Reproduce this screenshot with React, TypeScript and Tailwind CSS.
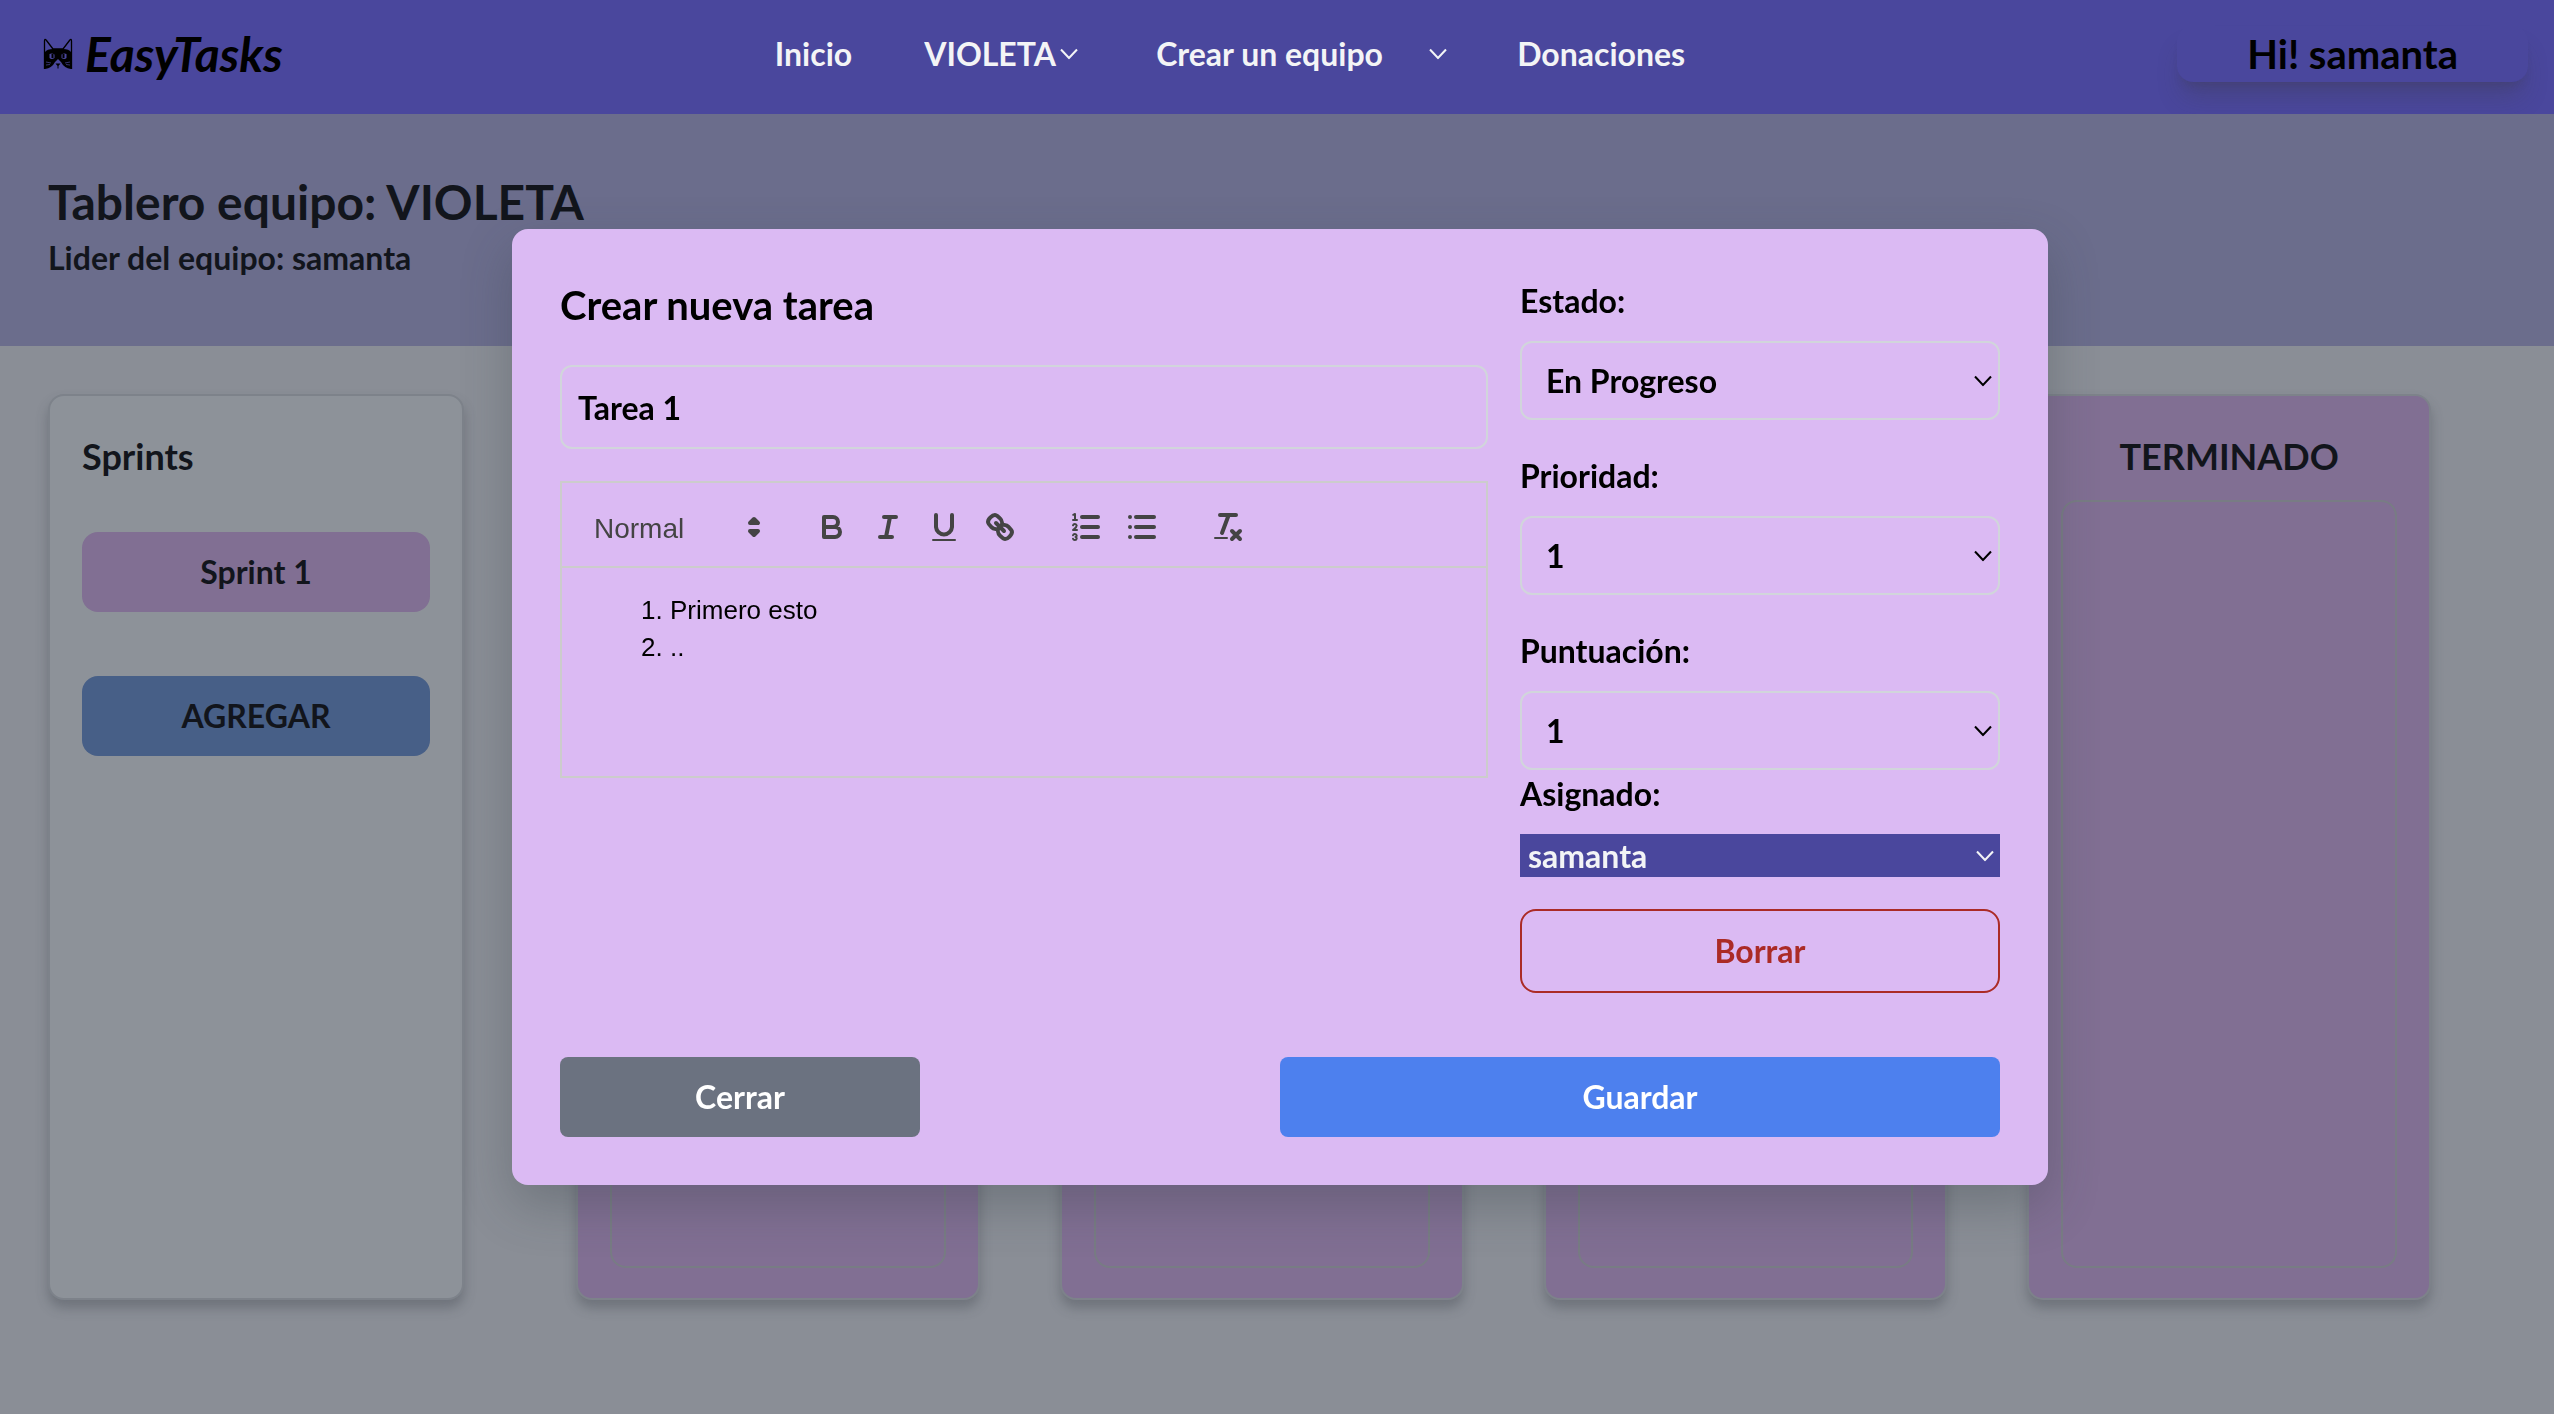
import type { ReactNode } from "react";

function Chevron({ className }: { className: string }) {
  return (
    <svg viewBox="0 0 18 11" fill="none" stroke="currentColor" strokeWidth="2" className={className} aria-hidden="true">
      <path d="M1 1l8 8.5L17 1" />
    </svg>
  );
}

function CatLogo() {
  return (
    <svg viewBox="0 0 30 32" className="h-8 w-[30px]" aria-hidden="true">
      <path d="M1.5 31V3Q1.500 0 3.500 2.500L10 11H20L26.500 2.500Q28.500 0 28.500 3V31" fill="none" stroke="black" strokeWidth="1.300" />
      <path
        fillRule="evenodd"
        d="M2 14Q4 11 10 11H20Q26 11 28 14V31Q21 30 18 24L15 21L12 24Q9 30 2 31ZM6.500 16V20Q8.500 22 11.500 20V16.500Q9 15 6.500 16ZM18.500 16.500V20Q21.500 22 23.500 20V16Q21 15 18.500 16.500Z"
      />
      <path d="M8.500 16h2v4h-2zM19.500 16h2v4h-2zM12.500 25.500h5l-2.500 3zM14.500 28h1v2.500h-1z" />
      <path d="M3 24l5 1M3 27l4-.5M27 24l-5 1M27 27l-4-.5" stroke="#4a479d" strokeWidth=".7" />
    </svg>
  );
}

function NavSelect({ options, label, className }: { options: string[]; label: string; className: string }) {
  return (
    <div className={`relative ${className}`}>
      <select aria-label={label} className="w-full appearance-none bg-transparent px-2 outline-none">
        {options.map((o) => (
          <option key={o}>{o}</option>
        ))}
      </select>
      <Chevron className="pointer-events-none absolute top-1/2 right-1.5 h-[11px] w-[18px] -translate-y-1/2" />
    </div>
  );
}

function Field({ id, label, options }: { id: string; label: string; options: string[] }) {
  return (
    <div className="flex flex-col gap-4">
      <label htmlFor={id} className="leading-12">
        {label}
      </label>
      <div className="relative">
        <select id={id} className="h-[79px] w-full appearance-none rounded-xl border-2 border-[#d1d5db] bg-transparent px-6 outline-none">
          {options.map((o) => (
            <option key={o}>{o}</option>
          ))}
        </select>
        <Chevron className="pointer-events-none absolute top-1/2 right-2 h-[11px] w-[18px] -translate-y-1/2" />
      </div>
    </div>
  );
}

function Tool({ label, children }: { label: string; children: ReactNode }) {
  return (
    <button type="button" aria-label={label} className="flex h-12 w-14 items-center justify-center">
      <svg viewBox="0 0 18 18" className="size-9" fill="none" stroke="#444" strokeWidth="2" strokeLinecap="round" strokeLinejoin="round">
        {children}
      </svg>
    </button>
  );
}

function Toolbar() {
  return (
    <div className="flex h-[87px] items-center gap-[30px] border-2 border-[#ccc] px-4 pt-1 text-[#444]">
      <div className="relative w-[196px]">
        <select aria-label="Formato" className="w-full appearance-none bg-transparent pl-4 text-[28px] leading-10 font-medium outline-none">
          <option>Normal</option>
        </select>
        <svg viewBox="0 0 18 18" className="pointer-events-none absolute top-1/2 right-0.5 size-9 -translate-y-1/2" fill="#444" stroke="#444" strokeWidth="2" strokeLinecap="round" strokeLinejoin="round" aria-hidden="true">
          <path d="M7 11l2 2 2-2zM7 7l2-2 2 2z" />
        </svg>
      </div>
      <div className="flex">
        <Tool label="Negrita">
          <path d="M5 4H9.500A2.500 2.500 0 0 1 12 6.500A2.500 2.500 0 0 1 9.500 9H5ZM5 9h5.500A2.500 2.500 0 0 1 13 11.500A2.500 2.500 0 0 1 10.500 14H5Z" />
        </Tool>
        <Tool label="Cursiva">
          <path d="M7 4H13M5 14H11M8 14L10 4" />
        </Tool>
        <Tool label="Subrayado">
          <path d="M5 3V9a4.012 4.012 0 0 0 8 0V3" />
          <rect x="3" y="15" width="12" height="1" rx=".5" fill="#444" stroke="none" />
        </Tool>
        <Tool label="Enlace">
          <path d="M7 7L11 11M8.900 4.577a3.476 3.476 0 0 1 .36 4.679A3.476 3.476 0 0 1 4.577 8.900C3.185 7.500 2.035 6.400 4.217 4.217S7.500 3.185 8.900 4.577ZM13.423 9.100a3.476 3.476 0 0 0-4.679-.36a3.476 3.476 0 0 0 .36 4.679c1.392 1.392 2.500 2.542 4.679.36S14.815 10.500 13.423 9.100Z" />
        </Tool>
      </div>
      <div className="flex">
        <Tool label="Lista numerada">
          <path d="M7 4H15M7 9H15M7 14H15" />
          <path strokeWidth="1" d="M2.500 5.500H4.500M3.500 5.500V2.500L2.600 2.900M4.500 10.500h-2c0-.234 1.850-1.076 1.850-2.234A.959.959 0 0 0 2.500 8.156M2.500 14.846a.959.959 0 0 0 1.850-.109A.7.7 0 0 0 3.750 14a.688.688 0 0 0 .6-.736a.959.959 0 0 0-1.850-.109" />
        </Tool>
        <Tool label="Lista con viñetas">
          <path d="M6 4H15M6 9H15M6 14H15M3 4V4M3 9V9M3 14V14" />
        </Tool>
      </div>
      <Tool label="Quitar formato">
        <path d="M5 3H13M6 12L9.350 3M11 11L15 15M15 11L11 15" />
        <rect x="2" y="14" width="7" height="1" rx=".5" fill="#444" stroke="none" />
      </Tool>
    </div>
  );
}

function Column({ title }: { title?: string }) {
  return (
    <article className="flex flex-col rounded-2xl border-2 border-[#7d828a] bg-[#816f93] px-8 pt-10 pb-[30px] shadow-[0_8px_12px_rgba(60,65,75,0.35)]">
      <h2 className="min-h-10 text-center text-[36px] leading-10">{title}</h2>
      <div className="mt-6 flex-1 rounded-2xl border-2 border-[#787c84]" />
    </article>
  );
}

function TaskDialog() {
  return (
    <div className="fixed inset-0 flex items-center justify-center pl-1.5">
      <form
        role="dialog"
        aria-label="Crear nueva tarea"
        className="w-full max-w-[1536px] rounded-2xl bg-[#dbbaf3] p-12 text-black shadow-[0_20px_50px_rgba(50,60,65,0.3)]"
      >
        <div className="flex">
          <div className="w-2/3 pr-8">
            <h2 className="mt-1 text-[40px] leading-12">Crear nueva tarea</h2>
            <input
              aria-label="Título"
              defaultValue="Tarea 1"
              className="mt-9 h-[84px] w-full rounded-xl border-2 border-[#d1d5db] bg-transparent px-4 outline-none"
            />
            <div className="mt-8 font-['Liberation_Sans',Arial,sans-serif] font-normal">
              <Toolbar />
              <div
                contentEditable
                suppressContentEditableWarning
                role="textbox"
                aria-label="Descripción"
                className="h-[210px] border-2 border-t-0 border-[#ccc] px-[30px] py-6 text-[26px] leading-[37px] outline-none"
              >
                <ol className="list-decimal pl-[78px]">
                  <li>Primero esto</li>
                  <li>..</li>
                </ol>
              </div>
            </div>
          </div>
          <div className="flex w-1/3 flex-col">
            <div className="flex flex-col gap-8">
              <Field id="estado" label="Estado:" options={["En Progreso", "Terminado"]} />
              <Field id="prioridad" label="Prioridad:" options={["1", "2", "3"]} />
              <Field id="puntos" label="Puntuación:" options={["1", "2", "3"]} />
            </div>
            <label htmlFor="asignado" className="leading-12">
              Asignado:
            </label>
            <div className="relative mt-4 bg-[#4a479d] text-[#f3f4f6]">
              <select id="asignado" className="block h-[43px] w-full appearance-none bg-transparent px-2 outline-none">
                <option>samanta</option>
              </select>
              <Chevron className="pointer-events-none absolute top-1/2 right-1.5 h-[11px] w-[18px] -translate-y-1/2" />
            </div>
            <button type="button" className="mt-8 h-[84px] rounded-2xl border-2 border-[#ab2b26] text-[#ab2b26]">
              Borrar
            </button>
          </div>
        </div>
        <div className="mt-16 flex justify-between">
          <button type="button" className="h-20 w-1/4 rounded-lg bg-[#6b7280] text-white">
            Cerrar
          </button>
          <button type="submit" className="h-20 w-1/2 rounded-lg bg-[#4d80ee] text-white">
            Guardar
          </button>
        </div>
      </form>
    </div>
  );
}

export default function App() {
  return (
    <div className="min-h-screen bg-[#8a8e96] font-['Lato','Open_Sans',sans-serif] text-[32px] leading-11 font-bold text-[#12151c]">
      <header className="flex h-[114px] items-center justify-between bg-[#4a479d] pr-[26px] pb-1.5 pl-[43px] text-[#f3f4f6]">
        <a href="#" className="flex items-center gap-3 text-[48px] text-black">
          <CatLogo />
          <span className="italic">EasyTasks</span>
        </a>
        <nav className="flex items-center gap-16">
          <a href="#">Inicio</a>
          <NavSelect label="Equipo" options={["VIOLETA"]} className="w-[168px]" />
          <NavSelect label="Acciones" options={["Crear un equipo"]} className="w-[305px]" />
          <a href="#">Donaciones</a>
        </nav>
        <div className="rounded-2xl px-[70px] pt-1 pb-1 text-[40px] leading-[48px] text-black shadow-[0_20px_25px_-5px_rgba(60,60,60,0.25),0_8px_10px_-6px_rgba(60,60,60,0.25)]">
          Hi! samanta
        </div>
      </header>
      <section className="relative flex h-[232px] flex-col justify-center bg-[#6b6d8c] px-12 pb-2.5">
        <h1 className="text-[48px] leading-16">Tablero equipo: VIOLETA</h1>
        <p className="mt-0.5">Lider del equipo: samanta</p>
      </section>
      <main className="flex gap-28 pt-12 pr-[123px] pl-12">
        <aside className="flex min-h-[906px] w-[416px] shrink-0 flex-col rounded-2xl border-2 border-[#7d828a] bg-[#8d9299] px-8 pt-10 shadow-[0_8px_12px_rgba(60,65,75,0.35)]">
          <h2 className="text-[36px] leading-10">Sprints</h2>
          <button type="button" className="mt-14 h-20 rounded-2xl bg-[#816f93]">
            Sprint 1
          </button>
          <button type="button" className="mt-16 h-20 rounded-2xl bg-[#475f87]">
            AGREGAR
          </button>
        </aside>
        <div className="grid flex-1 grid-cols-4 gap-20">
          <Column />
          <Column />
          <Column />
          <Column title="TERMINADO" />
        </div>
      </main>
      <TaskDialog />
    </div>
  );
}
